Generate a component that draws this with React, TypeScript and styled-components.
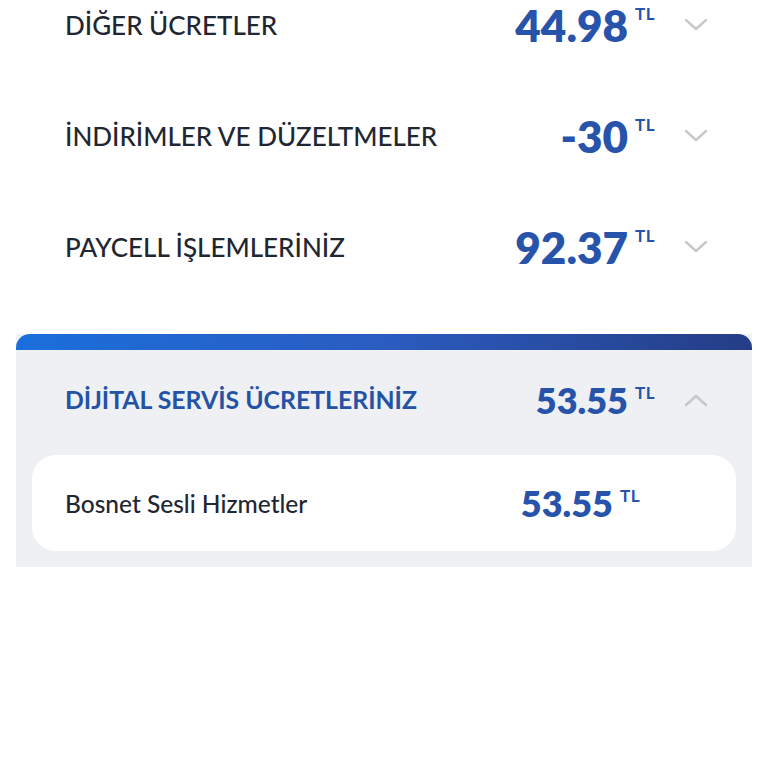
import React from 'react';
import styled, { createGlobalStyle } from 'styled-components';

const GlobalStyle = createGlobalStyle`
  html, body {
    margin: 0;
    padding: 0;
    background: #ffffff;
    overflow: hidden;
  }
  body {
    font-family: Lato, "Noto Sans", sans-serif;
    -webkit-font-smoothing: antialiased;
  }
`;

// STYLES
const Page = styled.div`
  width: 768px;
  height: 768px;
  overflow: hidden;
`;

const List = styled.div`
  margin-top: -31px;
  display: flex;
  flex-direction: column;
`;

const Row = styled.div`
  height: 111px;
  display: flex;
  align-items: center;
  justify-content: space-between;
  padding: 0 60px 0 65px;
`;

const Label = styled.span<{ $bold?: boolean; $blue?: boolean }>`
  font-size: ${(p) => (p.$bold ? 24.8 : 26)}px;
  letter-spacing: 0;
  font-weight: ${(p) => (p.$bold ? 700 : 500)};
  color: ${(p) => (p.$blue ? '#2452a4' : '#1f2733')};
`;

const Right = styled.div`
  display: flex;
  align-items: center;
`;

const Amount = styled.div<{ $size: number }>`
  display: flex;
  align-items: flex-start;
  color: #2753ab;
  font-weight: 800;
  font-size: ${(p) => p.$size}px;
  line-height: 1;
`;

const Currency = styled.span`
  font-size: 17px;
  font-weight: 700;
  margin-left: 7px;
  margin-top: 2px;
  letter-spacing: 0.5px;
`;

const ChevronBox = styled.div`
  width: 24px;
  height: 14px;
  margin-left: 29px;
  display: flex;
  align-items: center;
  justify-content: center;
`;

const Panel = styled.section`
  margin: 32px 16px 0;
  background: #eef0f4;
  padding-bottom: 16px;
`;

const PanelBar = styled.div`
  height: 16px;
  border-radius: 14px 14px 0 0;
  background: linear-gradient(90deg, #1a6fdc 0%, #2b5cc0 50%, #253d86 100%);
`;

const PanelHeader = styled.div`
  height: 99px;
  display: flex;
  align-items: center;
  justify-content: space-between;
  padding: 0 44px 6px 49px;
`;

const Card = styled.div`
  margin: 0 16px;
  height: 96px;
  background: #ffffff;
  border-radius: 24px;
  display: flex;
  align-items: center;
  justify-content: space-between;
  padding: 0 96px 0 33px;
`;

const ItemName = styled.span`
  font-size: 24.5px;
  color: #1f2733;
  font-weight: 500;
`;

// COMPONENTS
const Chevron: React.FC<{ up?: boolean }> = ({ up }) => (
  <ChevronBox>
    <svg width="24" height="14" viewBox="0 0 24 14" fill="none">
      <polyline
        points={up ? '2,12 12,3 22,12' : '2,2 12,11 22,2'}
        stroke="#c6c8cc"
        strokeWidth="2.4"
        strokeLinecap="round"
        strokeLinejoin="round"
      />
    </svg>
  </ChevronBox>
);

const Price: React.FC<{ value: string; size: number }> = ({ value, size }) => (
  <Amount $size={size}>
    {value}
    <Currency>TL</Currency>
  </Amount>
);

const rows = [
  { label: 'DİĞER ÜCRETLER', value: '44.98' },
  { label: 'İNDİRİMLER VE DÜZELTMELER', value: '-30' },
  { label: 'PAYCELL İŞLEMLERİNİZ', value: '92.37' },
];

const App: React.FC = () => (
  <Page>
    <GlobalStyle />
    <List>
      {rows.map((r) => (
        <Row key={r.label}>
          <Label>{r.label}</Label>
          <Right>
            <Price value={r.value} size={44} />
            <Chevron />
          </Right>
        </Row>
      ))}
    </List>

    <Panel>
      <PanelBar />
      <PanelHeader>
        <Label $bold $blue>
          DİJİTAL SERVİS ÜCRETLERİNİZ
        </Label>
        <Right>
          <Price value="53.55" size={36} />
          <Chevron up />
        </Right>
      </PanelHeader>
      <Card>
        <ItemName>Bosnet Sesli Hizmetler</ItemName>
        <Price value="53.55" size={36} />
      </Card>
    </Panel>
  </Page>
);

export default App;
